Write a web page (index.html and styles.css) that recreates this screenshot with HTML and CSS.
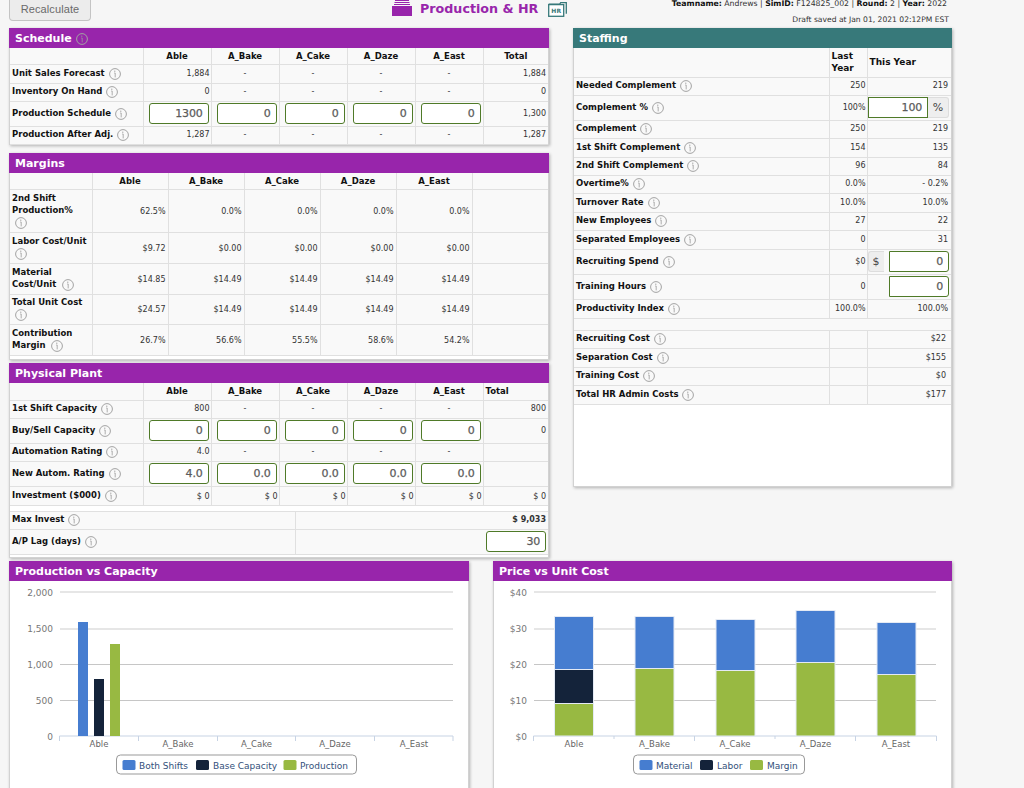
FILE: index.html
```html
<!DOCTYPE html>
<html lang="en">
<head>
<meta charset="utf-8">
<title>Production &amp; HR</title>
<link rel="stylesheet" href="styles.css">
</head>
<body>
<svg class="sprite" aria-hidden="true"><symbol id="i" viewBox="0 0 12 12"><circle cx="6" cy="6" r="5.4" fill="none" stroke="#a3a3a3"/><path d="M5.2 5h1v4.4" fill="none" stroke="#9a9a9a" stroke-width=".8"/><circle cx="5.8" cy="3.2" r=".6" fill="#9a9a9a"/></symbol></svg>
<div class="page">
  <header class="topbar">
    <button class="recalc" type="button">Recalculate</button>
    <svg class="prod-icon" viewBox="0 0 20 16"><path d="M3 0h14v1H3zM2.5 2h15v1h-15zM2 4h16v1H2zM0 6h20v10H0z" fill="#9825ab"/></svg>
    <h1 class="title">Production &amp; HR</h1>
    <svg class="hr-icon" viewBox="0 0 19 15"><path d="M.7 2.2h11l1-1.5h5.6v11" fill="none" stroke="#37797a" stroke-width="1.3"/><rect x=".7" y="2.6" width="15" height="11.7" fill="#fff" stroke="#37797a" stroke-width="1.3"/><text x="8.2" y="11" text-anchor="middle" class="hr-text">HR</text></svg>
    <div class="meta">
      <div><b>Teamname:</b> Andrews | <b>SimID:</b> F124825_002 | <b>Round:</b> 2 | <b>Year:</b> 2022</div>
      <div class="draft">Draft saved at Jan 01, 2021 02:12PM EST</div>
    </div>
  </header>

  <div class="main">
    <div class="left">
      <section class="panel schedule">
        <h2 class="bar">Schedule <svg class="info head"><use href="#i"/></svg></h2>
        <table class="grid six">
          <colgroup><col class="c-l"><col class="c-n"><col class="c-n"><col class="c-n"><col class="c-n"><col class="c-n"><col></colgroup>
          <tr class="r16 hd"><th></th><th>Able</th><th>A_Bake</th><th>A_Cake</th><th>A_Daze</th><th>A_East</th><th>Total</th></tr>
          <tr class="r19"><th>Unit Sales Forecast <svg class="info"><use href="#i"/></svg></th><td>1,884</td><td class="d">-</td><td class="d">-</td><td class="d">-</td><td class="d">-</td><td class="t">1,884</td></tr>
          <tr class="r18"><th>Inventory On Hand <svg class="info"><use href="#i"/></svg></th><td>0</td><td class="d">-</td><td class="d">-</td><td class="d">-</td><td class="d">-</td><td class="t">0</td></tr>
          <tr class="r25"><th>Production Schedule <svg class="info"><use href="#i"/></svg></th><td class="in"><input class="num" value="1300"></td><td class="in"><input class="num" value="0"></td><td class="in"><input class="num" value="0"></td><td class="in"><input class="num" value="0"></td><td class="in"><input class="num" value="0"></td><td class="t">1,300</td></tr>
          <tr class="r18"><th>Production After Adj. <svg class="info"><use href="#i"/></svg></th><td>1,287</td><td class="d">-</td><td class="d">-</td><td class="d">-</td><td class="d">-</td><td class="t">1,287</td></tr>
        </table>
      </section>

      <section class="panel margins">
        <h2 class="bar">Margins</h2>
        <table class="grid five">
          <colgroup><col class="c-m"><col class="c-o"><col class="c-o"><col class="c-o"><col class="c-o"><col class="c-o"><col></colgroup>
          <tr class="r16 hd"><th></th><th>Able</th><th>A_Bake</th><th>A_Cake</th><th>A_Daze</th><th>A_East</th><th></th></tr>
          <tr class="r43"><th>2nd Shift Production% <svg class="info"><use href="#i"/></svg></th><td>62.5%</td><td>0.0%</td><td>0.0%</td><td>0.0%</td><td>0.0%</td><td></td></tr>
          <tr class="r31"><th>Labor Cost/Unit <svg class="info"><use href="#i"/></svg></th><td>$9.72</td><td>$0.00</td><td>$0.00</td><td>$0.00</td><td>$0.00</td><td></td></tr>
          <tr class="r31"><th>Material Cost/Unit <svg class="info"><use href="#i"/></svg></th><td>$14.85</td><td>$14.49</td><td>$14.49</td><td>$14.49</td><td>$14.49</td><td></td></tr>
          <tr class="r30"><th>Total Unit Cost <svg class="info"><use href="#i"/></svg></th><td>$24.57</td><td>$14.49</td><td>$14.49</td><td>$14.49</td><td>$14.49</td><td></td></tr>
          <tr class="r31"><th>Contribution Margin <svg class="info"><use href="#i"/></svg></th><td>26.7%</td><td>56.6%</td><td>55.5%</td><td>58.6%</td><td>54.2%</td><td></td></tr>
        </table>
      </section>

      <section class="panel plant">
        <h2 class="bar">Physical Plant</h2>
        <table class="grid six">
          <colgroup><col class="c-l"><col class="c-n"><col class="c-n"><col class="c-n"><col class="c-n"><col class="c-n"><col></colgroup>
          <tr class="r17 hd"><th></th><th>Able</th><th>A_Bake</th><th>A_Cake</th><th>A_Daze</th><th>A_East</th><th class="tl">Total</th></tr>
          <tr class="r18"><th>1st Shift Capacity <svg class="info"><use href="#i"/></svg></th><td>800</td><td class="d">-</td><td class="d">-</td><td class="d">-</td><td class="d">-</td><td class="t">800</td></tr>
          <tr class="r25"><th>Buy/Sell Capacity <svg class="info"><use href="#i"/></svg></th><td class="in"><input class="num" value="0"></td><td class="in"><input class="num" value="0"></td><td class="in"><input class="num" value="0"></td><td class="in"><input class="num" value="0"></td><td class="in"><input class="num" value="0"></td><td class="t">0</td></tr>
          <tr class="r18"><th>Automation Rating <svg class="info"><use href="#i"/></svg></th><td>4.0</td><td class="d">-</td><td class="d">-</td><td class="d">-</td><td class="d">-</td><td class="t"></td></tr>
          <tr class="r25"><th>New Autom. Rating <svg class="info"><use href="#i"/></svg></th><td class="in"><input class="num" value="4.0"></td><td class="in"><input class="num" value="0.0"></td><td class="in"><input class="num" value="0.0"></td><td class="in"><input class="num" value="0.0"></td><td class="in"><input class="num" value="0.0"></td><td class="t"></td></tr>
          <tr class="r19 low"><th>Investment ($000) <svg class="info"><use href="#i"/></svg></th><td>$ 0</td><td>$ 0</td><td>$ 0</td><td>$ 0</td><td>$ 0</td><td class="t">$ 0</td></tr>
        </table>
        <table class="grid extra">
          <colgroup><col class="c-x"><col></colgroup>
          <tr class="r18"><th>Max Invest <svg class="info"><use href="#i"/></svg></th><td class="t"><b>$ 9,033</b></td></tr>
          <tr class="r25"><th>A/P Lag (days) <svg class="info"><use href="#i"/></svg></th><td class="t lag"><input class="num" value="30"></td></tr>
        </table>
      </section>
    </div>

    <section class="panel staffing">
      <h2 class="bar teal">Staffing</h2>
      <table class="grid staff">
        <colgroup><col class="c-s"><col class="c-y"><col></colgroup>
        <tr class="r29 hd"><th></th><th class="ll">Last Year</th><th class="ll">This Year</th></tr>
        <tr class="r18"><th>Needed Complement <svg class="info"><use href="#i"/></svg></th><td>250</td><td class="t">219</td></tr>
        <tr class="r25"><th>Complement % <svg class="info"><use href="#i"/></svg></th><td>100%</td><td class="in"><div class="group"><input class="num joined-r" value="100"><span class="addon">%</span></div></td></tr>
        <tr class="r18"><th>Complement <svg class="info"><use href="#i"/></svg></th><td>250</td><td class="t">219</td></tr>
        <tr class="r19"><th>1st Shift Complement <svg class="info"><use href="#i"/></svg></th><td>154</td><td class="t">135</td></tr>
        <tr class="r18"><th>2nd Shift Complement <svg class="info"><use href="#i"/></svg></th><td>96</td><td class="t">84</td></tr>
        <tr class="r18"><th>Overtime% <svg class="info"><use href="#i"/></svg></th><td>0.0%</td><td class="t">- 0.2%</td></tr>
        <tr class="r19"><th>Turnover Rate <svg class="info"><use href="#i"/></svg></th><td>10.0%</td><td class="t">10.0%</td></tr>
        <tr class="r18"><th>New Employees <svg class="info"><use href="#i"/></svg></th><td>27</td><td class="t">22</td></tr>
        <tr class="r19"><th>Separated Employees <svg class="info"><use href="#i"/></svg></th><td>0</td><td class="t">31</td></tr>
        <tr class="r25"><th>Recruiting Spend <svg class="info"><use href="#i"/></svg></th><td>$0</td><td class="in"><div class="group"><span class="addon left">$</span><input class="num joined-l" value="0"></div></td></tr>
        <tr class="r25"><th>Training Hours <svg class="info"><use href="#i"/></svg></th><td>0</td><td class="in"><div class="group end"><input class="num joined-l" value="0"></div></td></tr>
        <tr class="r19"><th>Productivity Index <svg class="info"><use href="#i"/></svg></th><td>100.0%</td><td class="t">100.0%</td></tr>
        <tr class="r12"><th class="span" colspan="3"></th></tr>
        <tr class="r18"><th>Recruiting Cost <svg class="info"><use href="#i"/></svg></th><td></td><td class="t c">$22</td></tr>
        <tr class="r19"><th>Separation Cost <svg class="info"><use href="#i"/></svg></th><td></td><td class="t c">$155</td></tr>
        <tr class="r18"><th>Training Cost <svg class="info"><use href="#i"/></svg></th><td></td><td class="t c">$0</td></tr>
        <tr class="r19"><th>Total HR Admin Costs <svg class="info"><use href="#i"/></svg></th><td></td><td class="t c">$177</td></tr>
      </table>
    </section>
  </div>

  <div class="charts">
    <section class="panel chart">
      <h2 class="bar">Production vs Capacity</h2>
      <svg class="plot" viewBox="9 581 460 207">
        <g class="grid-l"><path d="M60 592h393M60 629h393"/></g>
        <g class="grid-d"><path d="M60 664.5h393M60 700.5h393"/></g>
        <path class="axis" d="M59.5 736h393.5M59.5 736v5M138.5 736v5M217.5 736v5M295.5 736v5M374.5 736v5M453 736v5"/>
        <g class="ylab"><text x="53" y="596">2,000</text><text x="53" y="632">1,500</text><text x="53" y="668">1,000</text><text x="53" y="704">500</text><text x="53" y="740">0</text></g>
        <rect class="blue" x="78" y="622" width="10" height="114"/>
        <rect class="navy" x="94" y="679" width="10" height="57"/>
        <rect class="green" x="110" y="644" width="10" height="92"/>
        <g class="xlab"><text x="99" y="747">Able</text><text x="178" y="747">A_Bake</text><text x="256.500" y="747">A_Cake</text><text x="335" y="747">A_Daze</text><text x="414" y="747">A_East</text></g>
        <rect class="legend" x="116.500" y="755" width="240" height="19" rx="4"/>
        <rect class="blue" x="122.500" y="760" width="13" height="10" rx="1.500"/><text class="ltext" x="139" y="769">Both Shifts</text>
        <rect class="navy" x="196" y="760" width="13" height="10" rx="1.500"/><text class="ltext" x="213" y="769">Base Capacity</text>
        <rect class="green" x="283.500" y="760" width="13" height="10" rx="1.500"/><text class="ltext" x="300" y="769">Production</text>
      </svg>
    </section>
    <section class="panel chart narrow">
      <h2 class="bar">Price vs Unit Cost</h2>
      <svg class="plot" viewBox="493 581 460 207">
        <g class="grid-l"><path d="M534 592h402M534 629h402"/></g>
        <g class="grid-d"><path d="M534 664.500h402M534 700.500h402"/></g>
        <path class="axis" d="M533.5 736h403M533.5 736v5M614 736v3M694.500 736v5M775 736v3M855.500 736v5M936.500 736v5"/>
        <g class="ylab"><text x="527" y="596">$40</text><text x="527" y="632">$30</text><text x="527" y="668">$20</text><text x="527" y="704">$10</text><text x="527" y="740">$0</text></g>
        <g class="stack">
          <rect class="blue" x="554.500" y="616.500" width="39" height="53"/><rect class="navy" x="554.500" y="669.500" width="39" height="34"/><rect class="green" x="554.500" y="703.500" width="39" height="32.500"/>
          <rect class="blue" x="635" y="616.500" width="39" height="52"/><rect class="green" x="635" y="668.500" width="39" height="67.500"/>
          <rect class="blue" x="716" y="619.500" width="39" height="51"/><rect class="green" x="716" y="670.500" width="39" height="65.500"/>
          <rect class="blue" x="796" y="610.500" width="39" height="52"/><rect class="green" x="796" y="662.500" width="39" height="73.500"/>
          <rect class="blue" x="877" y="622.500" width="39" height="52"/><rect class="green" x="877" y="674.500" width="39" height="61.500"/>
        </g>
        <g class="xlab"><text x="574" y="747">Able</text><text x="654.500" y="747">A_Bake</text><text x="735" y="747">A_Cake</text><text x="815.500" y="747">A_Daze</text><text x="896" y="747">A_East</text></g>
        <rect class="legend" x="633.500" y="755" width="171" height="19" rx="4"/>
        <rect class="blue" x="639.500" y="760" width="13" height="10" rx="1.500"/><text class="ltext" x="656" y="769">Material</text>
        <rect class="navy" x="700" y="760" width="13" height="10" rx="1.500"/><text class="ltext" x="717" y="769">Labor</text>
        <rect class="green" x="750" y="760" width="13" height="10" rx="1.500"/><text class="ltext" x="767" y="769">Margin</text>
      </svg>
    </section>
  </div>
</div>
</body>
</html>
```
FILE: styles.css
```css
* { box-sizing: border-box; }
html, body { margin: 0; height: 788px; overflow: hidden; }
body { background: #f6f6f6; color: #333; font: 8px/12px "DejaVu Sans", Verdana, sans-serif; }
.sprite { position: absolute; width: 0; height: 0; }
.page { padding: 0 0 0 9px; }

.topbar { display: flex; align-items: flex-start; height: 28px; }
.recalc { width: 82px; height: 21px; padding: 0 0 3px; border: 1px solid #c4c4c4; border-top: 0; border-radius: 0 0 4px 4px; background: #ececec; color: #6a6a6a; font: 11px "Liberation Sans", Arial, sans-serif; letter-spacing: .1px; }
.prod-icon { width: 20px; height: 16px; margin-left: 301px; flex: none; }
.title { margin: 0 0 0 8px; color: #9825ab; font: bold 12.7px/17px "DejaVu Sans", sans-serif; white-space: nowrap; }
.hr-icon { width: 19px; height: 15px; margin: 2px 0 0 10px; flex: none; }
.hr-text { font: bold 6px "DejaVu Sans", sans-serif; fill: #37797a; }
.meta { margin-left: auto; padding-right: 77px; text-align: right; color: #333; white-space: nowrap; font-size: 7.75px; line-height: 8px; }
.meta b { color: #111; }
.draft { margin: 8px -2px 0 0; font-size: 7.6px; line-height: 8px; }

.main { display: flex; gap: 24px; align-items: flex-start; }
.left { width: 540px; display: flex; flex-direction: column; }
.panel { background: #fff; border: 1px solid #d2d2d2; border-top: 0; box-shadow: 1px 1px 3px rgba(0, 0, 0, .28); }
.schedule { height: 117px; margin-bottom: 8px; }
.margins { height: 207px; margin-bottom: 3px; }
.plant { height: 195px; }
.staffing { width: 379px; height: 459px; }
.bar { display: flex; align-items: center; gap: 4px; height: 20px; margin: 0 -1px; padding: 2px 0 0 6px; background: #9825ab; color: #fff; font: bold 11px/18px "DejaVu Sans", sans-serif; }
.teal { background: #37797a; }
.info { display: inline-block; width: 12px; height: 12px; margin-left: 1px; vertical-align: -4px; }
.five .info { margin-left: 3px; }
.head { margin-left: 0; }

.grid { border-collapse: collapse; table-layout: fixed; width: 100%; background: #f9f9f9; }
.grid th, .grid td { padding: 0 2px; border: 1px solid #e0e0e0; font-size: 8px; line-height: 12px; }
.grid tr:first-child > * { border-top: 0; }
.grid tr > :first-child { border-left: 0; }
.grid tr > :last-child { border-right: 0; }
.grid th { padding-bottom: 1px; text-align: left; font-weight: bold; font-size: 8.5px; color: #111; }
.grid td { text-align: right; padding-right: 1px; color: #333; }
.grid .hd th { padding-bottom: 0; text-align: center; font-size: 8.5px; }
.grid .hd .tl { text-align: left; padding-left: 2px; }
.grid .hd .ll { text-align: left; padding-left: 2px; font-size: 9px; line-height: 12px; }
.grid .d { text-align: center; padding-right: 2px; }
.grid .t { padding-right: 2px; }
.staff .t { padding-right: 3px; }
.grid .c { padding-right: 5px; }
.grid .in { padding: 0 2px 0 0; }
.staff .in { padding-right: 1px; }
.five td { padding: 2px 2px 0 0; }
.low td { padding-top: 2px; }
.c-l { width: 133px; }
.c-n { width: 68px; }
.c-m { width: 82px; }
.c-o { width: 76px; }
.c-x { width: 285px; }
.c-s { width: 255px; }
.c-y { width: 38px; }
.extra { margin-top: 5px; border-top: 1px solid #e0e0e0; border-bottom: 1px solid #e0e0e0; }
.staff .span { background: #f9f9f9; }

.r12 > * { height: 12px; }
.r16 > * { height: 16px; }
.r17 > * { height: 17px; }
.r18 > * { height: 18px; }
.r19 > * { height: 19px; }
.r25 > * { height: 25px; }
.r29 > * { height: 29px; }
.r30 > * { height: 30px; }
.r31 > * { height: 31px; }
.r43 > * { height: 43px; }

.num { display: block; width: 60px; height: 21px; margin-left: auto; padding: 0 5px 0 0; border: 1px solid #4f7a28; border-radius: 3px; background: #fff; color: #5c5c5c; text-align: right; font: 11px "DejaVu Sans", sans-serif; letter-spacing: -.2px; -webkit-text-stroke: .25px #5c5c5c; }
.group { display: flex; justify-content: flex-end; padding-right: 1px; }
.group .num { flex: none; }
.joined-r { border-radius: 0; }
.joined-l { border-radius: 0 3px 3px 0; }
.addon { display: flex; align-items: center; justify-content: center; width: 21px; height: 21px; background: #eee; border: 1px solid #ddd; border-left: 0; border-radius: 0 3px 3px 0; font-size: 11px; color: #444; }
.addon.left { width: 16px; border: 1px solid #ddd; border-right: 0; border-radius: 3px 0 0 3px; }

.charts { display: flex; gap: 24px; margin-top: 3px; }
.chart { width: 460px; height: 240px; }
.narrow { width: 459px; }
.plot { display: block; width: 460px; height: 207px; margin: 0 -1px; }
.grid-l path { stroke: #e6e6e6; stroke-width: 2; fill: none; }
.grid-d path { stroke: #c6c6c6; stroke-width: 1; fill: none; }
.axis { stroke: #c7d3e4; stroke-width: 1; fill: none; }
.ylab text { font: 9px "DejaVu Sans", sans-serif; fill: #777; text-anchor: end; }
.xlab text { font: 8.5px "DejaVu Sans", sans-serif; fill: #666; text-anchor: middle; }
.blue { fill: #467dd0; }
.navy { fill: #14233a; }
.green { fill: #98b942; }
.stack rect { stroke: #e4eaf4; stroke-width: 1; }
.legend { fill: #fff; stroke: #999; }
.ltext { font: 9px "DejaVu Sans", sans-serif; fill: #33507a; }
```
